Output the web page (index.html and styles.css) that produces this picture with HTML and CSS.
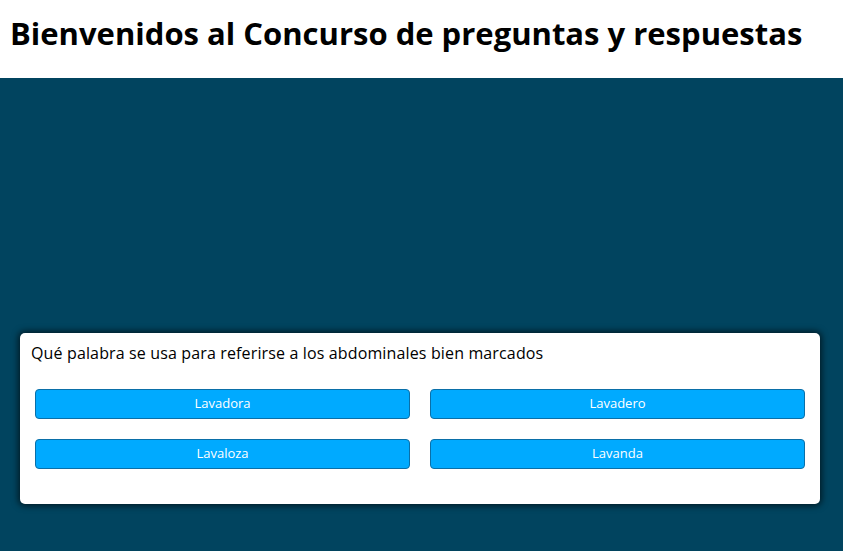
FILE: index.html
```html
<!DOCTYPE html>
<html lang="es">
<head>
<meta charset="utf-8">
<title>Concurso</title>
<link rel="stylesheet" href="styles.css">
</head>
<body>
<header class="header">
  <h1 class="title">Bienvenidos al Concurso de preguntas y respuestas</h1>
</header>
<main class="stage">
  <section class="card">
    <p class="question">Qué palabra se usa para referirse a los abdominales bien marcados</p>
    <div class="options">
      <button class="option">Lavadora</button>
      <button class="option">Lavadero</button>
      <button class="option">Lavaloza</button>
      <button class="option">Lavanda</button>
    </div>
  </section>
</main>
</body>
</html>
```

FILE: styles.css
```css
html, body {
  margin: 0;
  padding: 0;
  height: 100%;
}
body {
  font-family: "Trebuchet MS", "Open Sans", sans-serif;
  display: flex;
  flex-direction: column;
  background: #01445f;
}
.header {
  background: #ffffff;
  height: 78px;
  padding: 0 10px;
  box-sizing: border-box;
}
.title {
  margin: 0;
  padding-top: 12px;
  font-size: 31px;
  line-height: 42px;
  font-weight: bold;
  color: #000;
}
.stage {
  flex: 1;
  display: flex;
  flex-direction: column;
  justify-content: flex-end;
  padding: 0 23px 47px 20px;
}
.card {
  background: #fff;
  border-radius: 5px;
  box-shadow: 0 0 6px 2px rgba(0, 0, 0, 0.6);
  height: 171px;
  box-sizing: border-box;
  padding: 10px 15px 0 15px;
}
.question {
  margin: 0 0 0 -4px;
  font-size: 16px;
  letter-spacing: 0.14px;
  color: #000;
  line-height: 20px;
}
.options {
  margin-top: 26px;
  display: grid;
  grid-template-columns: 1fr 1fr;
  gap: 20px;
}
.option {
  height: 30px;
  background: #00aaff;
  border: 1px solid #0a6fa8;
  border-radius: 4px;
  color: #fff;
  font-family: inherit;
  font-size: 13px;
  padding: 0 0 2px 0;
}
```
